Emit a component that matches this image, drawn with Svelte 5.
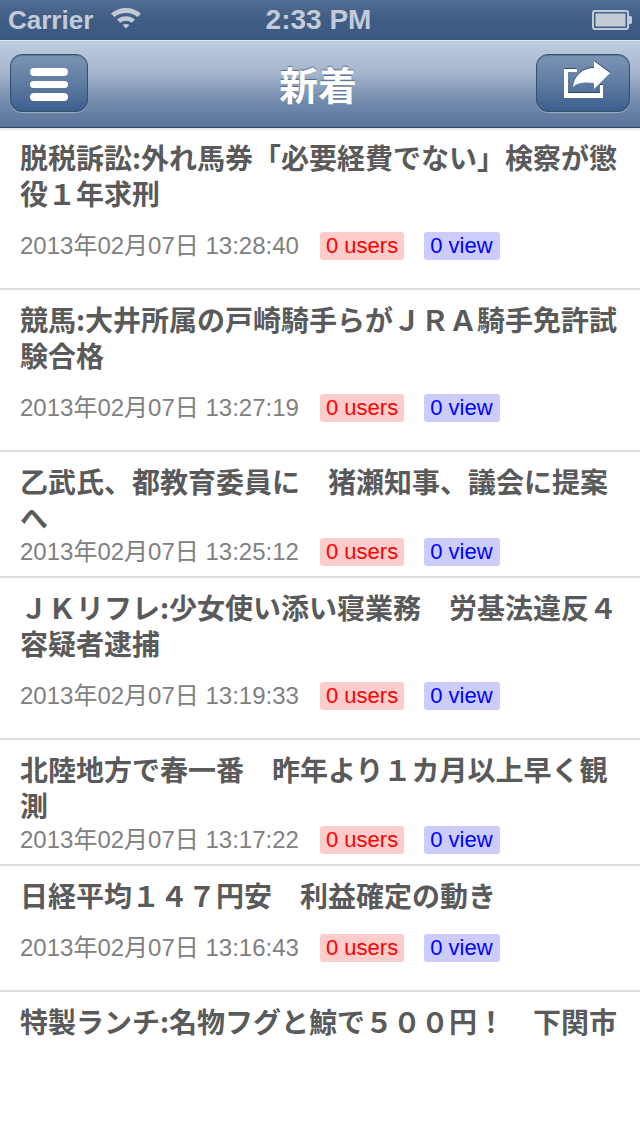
<script>
  const items = [
    { title: "脱税訴訟:外れ馬券「必要経費でない」検察が懲役\uFF11年求刑", date: "2013年02月07日 13:28:40", fit: "loose" },
    { title: "競馬:大井所属の戸崎騎手らが\uFF2A\uFF32\uFF21騎手免許試験合格", date: "2013年02月07日 13:27:19", fit: "loose" },
    { title: "乙武氏、都教育委員に\u3000猪瀬知事、議会に提案へ", date: "2013年02月07日 13:25:12", fit: "tight" },
    { title: "\uFF2A\uFF2Bリフレ:少女使い添い寝業務\u3000労基法違反\uFF14容疑者逮捕", date: "2013年02月07日 13:19:33", fit: "loose" },
    { title: "北陸地方で春一番\u3000昨年より\uFF11カ月以上早く観測", date: "2013年02月07日 13:17:22", fit: "tight" },
    { title: "日経平均\uFF11\uFF14\uFF17円安\u3000利益確定の動き", date: "2013年02月07日 13:16:43", fit: "single" }
  ]
  const lastTitle = "特製ランチ:名物フグと鯨で\uFF15\uFF10\uFF10円\uFF01\u3000下関市"
</script>

<div class="page">
  <div class="status">
    <div class="carrier">
      <span>Carrier</span>
      <svg width="32" height="24" viewBox="0 0 32 24">
        <path d="M1 8.500C9 1 23 1 31 8.500L27.500 12C21.500 6.500 10.500 6.500 4.500 12Z" fill="#c3cbd7" />
        <path d="M7 14.500C12 10 20 10 25 14.500L21.800 17.800C18.500 15 13.500 15 10.200 17.800Z" fill="#c3cbd7" />
        <path d="M12.500 20C14.500 18.500 17.500 18.500 19.500 20L16 23.500Z" fill="#c3cbd7" />
      </svg>
    </div>
    <div class="time">2:33 PM</div>
    <div class="battery">
      <svg width="40" height="20" viewBox="0 0 40 20">
        <rect x="1" y="1" width="35" height="18" rx="2" fill="none" stroke="#c3cbd7" stroke-width="2" />
        <rect x="3.500" y="3.500" width="30" height="13" fill="#c3cbd7" />
        <path d="M37 6h1.500a1.500 1.500 0 0 1 1.500 1.500v5a1.500 1.500 0 0 1-1.500 1.500H37Z" fill="#c3cbd7" />
      </svg>
    </div>
  </div>

  <div class="nav">
    <button class="btn menu" aria-label="menu">
      <svg width="38" height="34" viewBox="0 0 38 34">
        <rect x="0" y="0" width="38" height="8" rx="4" fill="#fff" />
        <rect x="0" y="13" width="38" height="7" rx="3.500" fill="#fff" />
        <rect x="0" y="25" width="38" height="8" rx="4" fill="#fff" />
      </svg>
    </button>
    <h1>新着</h1>
    <button class="btn share" aria-label="share">
      <svg width="48" height="38" viewBox="0 0 48 38">
        <path d="M1 9H14V12H5V33H37V25H40V38H1Z" fill="#fff" />
        <path d="M31 1L47 13L31 29V23C22 22 15 22 10 27C11 16 19 8 31 8Z" fill="#fff" />
      </svg>
    </button>
  </div>

  <ul class="list">
    {#each items as item}
      <li class="row {item.fit}">
        <div class="title">{item.title}</div>
        <div class="meta">
          <span class="date">{item.date}</span>
          <span class="tag users">0 users</span>
          <span class="tag views">0 view</span>
        </div>
      </li>
    {/each}
    <li class="row last">
      <div class="title">{lastTitle}</div>
    </li>
  </ul>
</div>

<style>
  :global(body) {
    margin: 0;
    background: #fff;
  }

  .page {
    width: 640px;
    height: 1136px;
    overflow: hidden;
    font-family: "Liberation Sans", "Noto Sans CJK JP", sans-serif;
  }

  .status {
    height: 40px;
    box-sizing: border-box;
    padding: 0 8px;
    display: grid;
    grid-template-columns: 1fr auto 1fr;
    align-items: center;
    background: linear-gradient(#526d92, #3f5c85 50%, #3d5a83);
    color: #c3cbd7;
    font-size: 28px;
    font-weight: bold;
  }

  .carrier {
    display: flex;
    align-items: center;
    gap: 17px;
    font-size: 26px;
  }

  .carrier svg {
    margin-top: -6px;
  }

  .time {
    margin-left: -3px;
  }

  .battery {
    justify-self: end;
    display: flex;
  }

  .nav {
    height: 88px;
    box-sizing: border-box;
    border-top: 1px solid #e4e9f0;
    border-bottom: 1px solid #2f4464;
    padding: 0 10px 2px;
    display: grid;
    grid-template-columns: 1fr auto 1fr;
    align-items: center;
    background: linear-gradient(#bfcddf, #a3b4cc 38%, #7189ab 72%, #5a7399);
    box-shadow: 0 1px 3px rgba(0, 0, 0, 0.18);
  }

  .nav h1 {
    margin: 0;
    font-family: "Noto Sans CJK JP", sans-serif;
    font-size: 39px;
    font-weight: bold;
    color: #fff;
    text-shadow: 0 -1px 1px rgba(40, 60, 90, 0.6);
    line-height: 1;
    transform: translateX(-2px);
  }

  .btn {
    height: 58px;
    padding: 0;
    border: 1px solid #34506f;
    border-radius: 12px;
    background: linear-gradient(#7d94b4, #5f7ca2 50%, #3d5f8e);
    box-shadow: 0 1px 0 rgba(255, 255, 255, 0.35), inset 0 1px 1px rgba(30, 50, 80, 0.3);
    display: flex;
    align-items: center;
    justify-content: center;
  }

  .menu {
    width: 78px;
  }

  .menu svg {
    margin-top: 3px;
  }

  .share {
    width: 94px;
    justify-self: end;
  }

  .share svg {
    margin: 0 0 8px 8px;
    filter: drop-shadow(0 -1px 0 rgba(30, 50, 80, 0.7));
  }

  .list {
    margin: 0;
    padding: 0;
    list-style: none;
  }

  .row {
    padding: 11px 20px 0;
    border-bottom: 2px solid #dedede;
    box-sizing: border-box;
  }

  .row.loose {
    height: 162px;
  }

  .row.tight,
  .row.single {
    height: 126px;
  }

  .row.last {
    border: none;
  }

  .title {
    font-family: "Noto Sans CJK JP", sans-serif;
    font-size: 28px;
    font-weight: bold;
    line-height: 36px;
    color: #5a5a5a;
  }

  .meta {
    display: flex;
    align-items: center;
    height: 28px;
    margin-top: 21px;
    font-size: 22px;
    color: #808080;
  }

  .row.tight .meta {
    margin-top: 3px;
  }

  .date {
    width: 300px;
    margin-bottom: 6px;
    font-size: 24px;
    white-space: nowrap;
  }

  .tag {
    height: 28px;
    line-height: 28px;
    padding: 0 6px;
    border-radius: 3px;
  }

  .users {
    background: #ffcccc;
    color: #ff0000;
    margin-right: 20px;
  }

  .views {
    background: #ccccff;
    color: #0000ff;
    padding-right: 7px;
  }
</style>
